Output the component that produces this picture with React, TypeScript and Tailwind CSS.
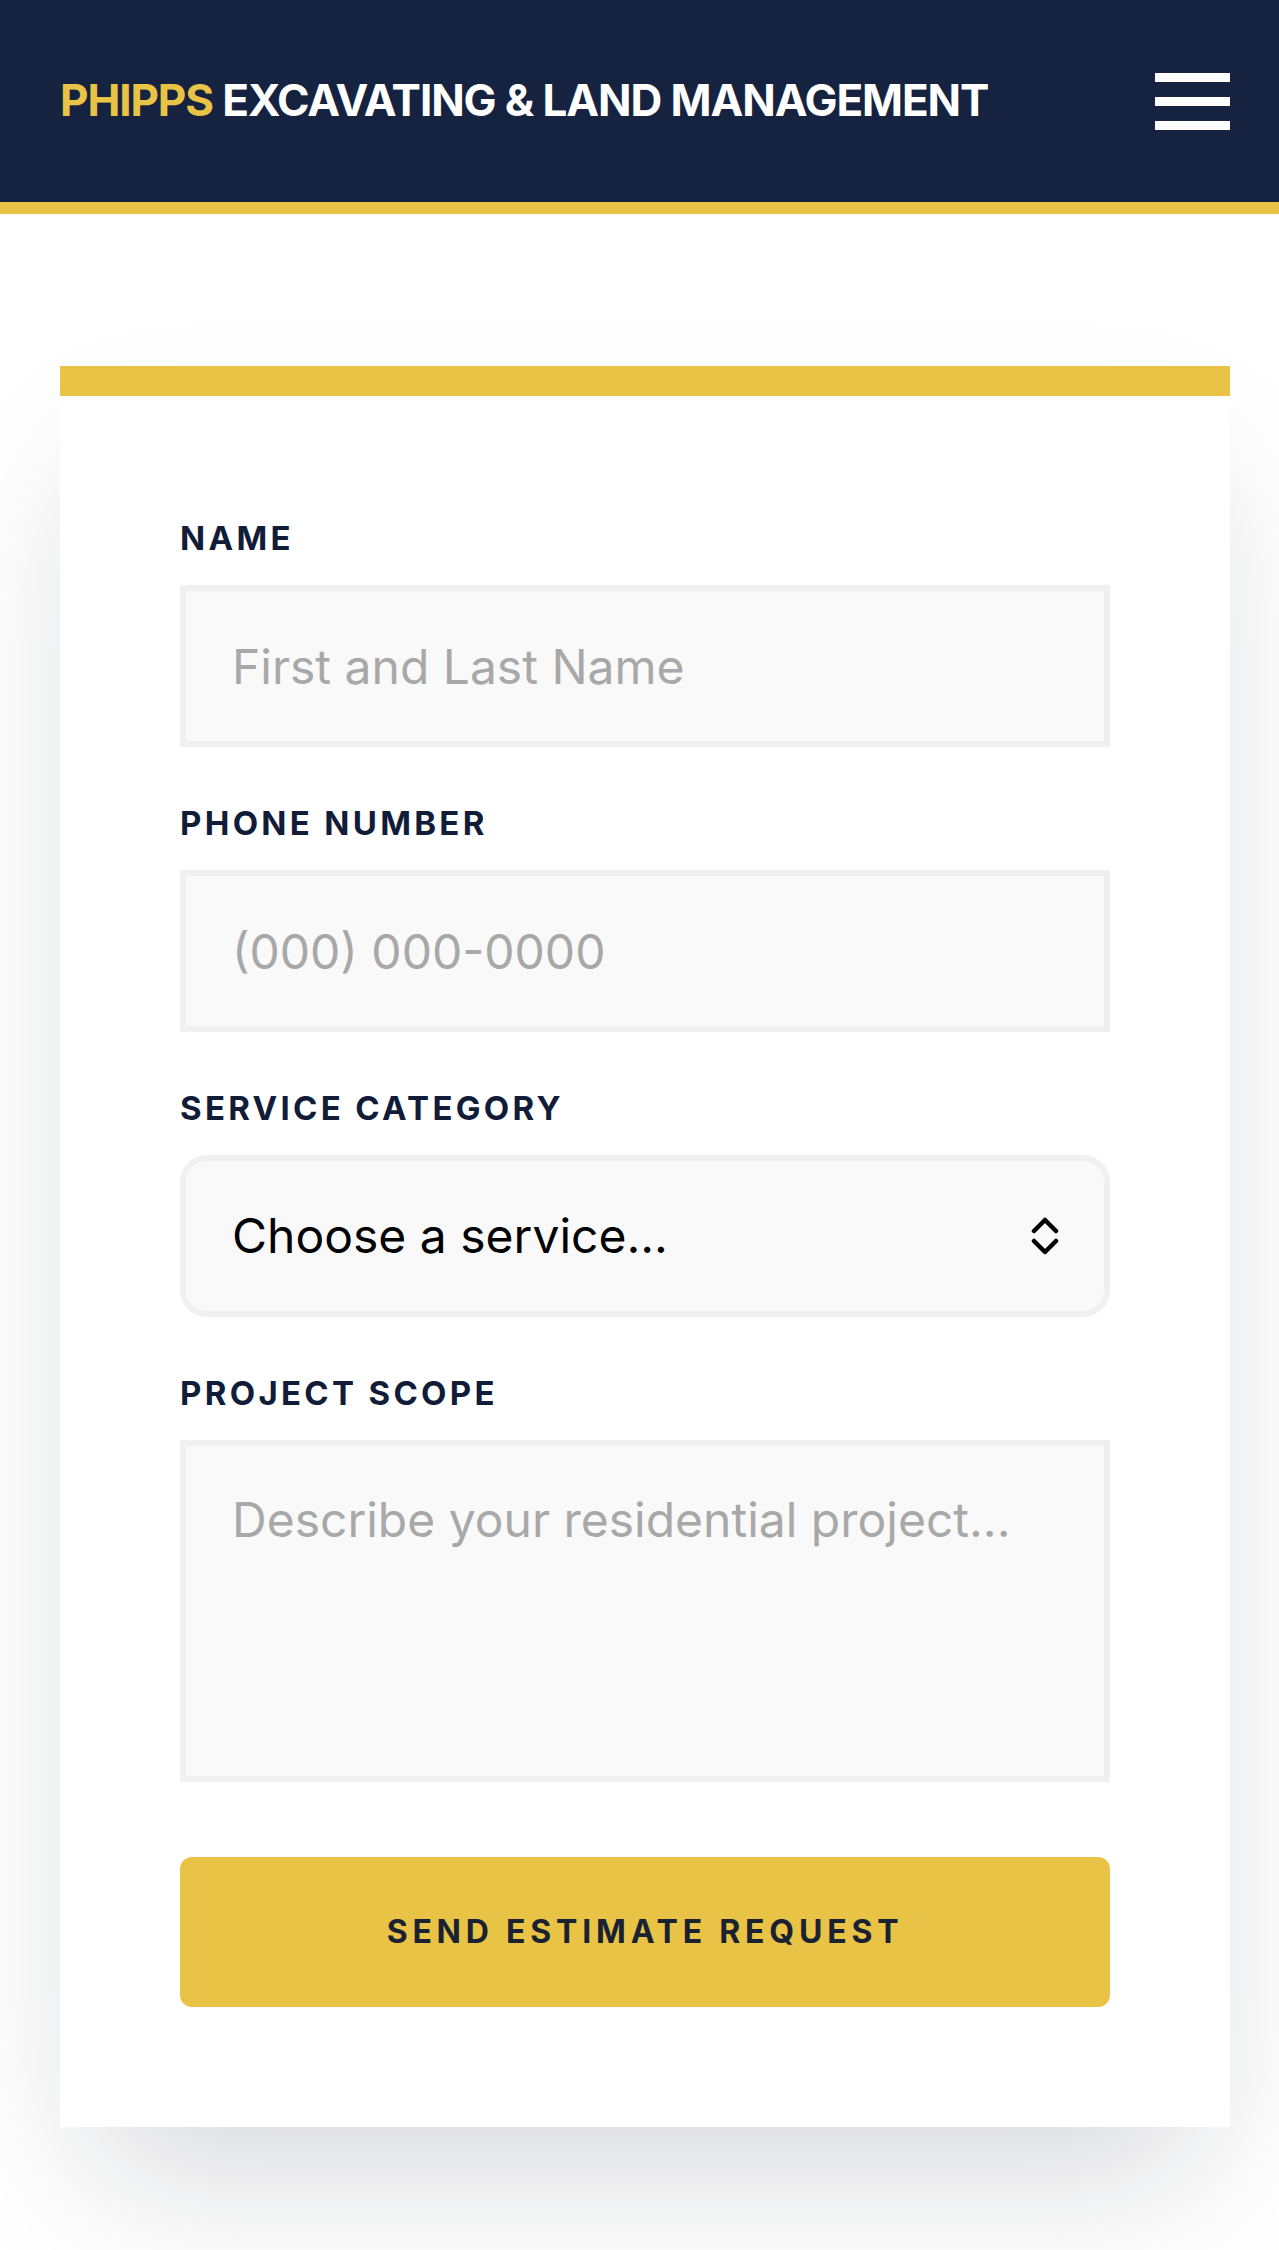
import React from "react";

const font = { fontFamily: "Inter, 'Noto Sans', 'Liberation Sans', sans-serif" };

function Label({ children }: { children: React.ReactNode }) {
  return (
    <label className="block text-[33px] leading-[45px] font-bold tracking-[0.1em] text-[#111c38] mb-6">
      {children}
    </label>
  );
}

export default function App() {
  return (
    <div className="min-h-[2250px] bg-white overflow-hidden" style={font}>
      <header className="h-[214px] bg-[#162340] border-b-[12px] border-[#e8c345] flex items-center justify-between pl-[60px] pr-[49px]">
        <div className="text-[44px] font-bold tracking-[-0.025em] leading-none whitespace-nowrap -mt-[2px]">
          <span className="text-[#e8c345]">PHIPPS</span>{" "}
          <span className="text-white">EXCAVATING &amp; LAND MANAGEMENT</span>
        </div>
        <button className="flex flex-col gap-[15px] w-[75px]" aria-label="Menu">
          <span className="block h-[9px] w-[75px] bg-white" />
          <span className="block h-[9px] w-[75px] bg-white" />
          <span className="block h-[9px] w-[75px] bg-white" />
        </button>
      </header>

      <main className="pt-[152px] pl-[60px] pr-[49px] pb-[130px]">
        <div className="bg-white border-t-[30px] border-[#e8c345] p-[120px] shadow-[0_75px_150px_-36px_rgba(17,24,39,0.18)]">
          <div className="mb-[54px]">
            <Label>NAME</Label>
            <input
              type="text"
              placeholder="First and Last Name"
              className="block w-full h-[162px] bg-[#f9f9f9] border-[6px] border-[#f0f0f0] px-[46px] text-[48px] text-black placeholder:text-[#a8a8a8] outline-none"
            />
          </div>
          <div className="mb-[54px]">
            <Label>PHONE NUMBER</Label>
            <input
              type="tel"
              placeholder="(000) 000-0000"
              className="block w-full h-[162px] bg-[#f9f9f9] border-[6px] border-[#f0f0f0] px-[46px] text-[48px] text-black placeholder:text-[#a8a8a8] outline-none"
            />
          </div>
          <div className="mb-[54px]">
            <Label>SERVICE CATEGORY</Label>
            <div className="flex items-center w-full h-[162px] bg-[#f9f9f9] border-[6px] border-[#f0f0f0] rounded-[27px] pl-[46px] pr-[45px] text-[48px] text-black">
              <span className="flex-1">Choose a service...</span>
              <svg width="28" height="40" viewBox="0 0 28 40" fill="none" stroke="#000" strokeWidth="4.5" strokeLinecap="round" strokeLinejoin="round">
                <path d="M3 15 L14 4 L25 15" />
                <path d="M3 25 L14 36 L25 25" />
              </svg>
            </div>
          </div>
          <div>
            <Label>PROJECT SCOPE</Label>
            <textarea
              placeholder="Describe your residential project..."
              className="block w-full h-[342px] bg-[#f9f9f9] border-[6px] border-[#f0f0f0] px-[46px] py-[42px] text-[48px] leading-[64px] text-black placeholder:text-[#a8a8a8] outline-none resize-none"
            />
          </div>
          <button className="mt-[75px] w-full h-[150px] bg-[#e8c345] rounded-[12px] text-[32px] font-bold tracking-[0.15em] text-[#1a2232]">
            SEND ESTIMATE REQUEST
          </button>
        </div>
      </main>
    </div>
  );
}
